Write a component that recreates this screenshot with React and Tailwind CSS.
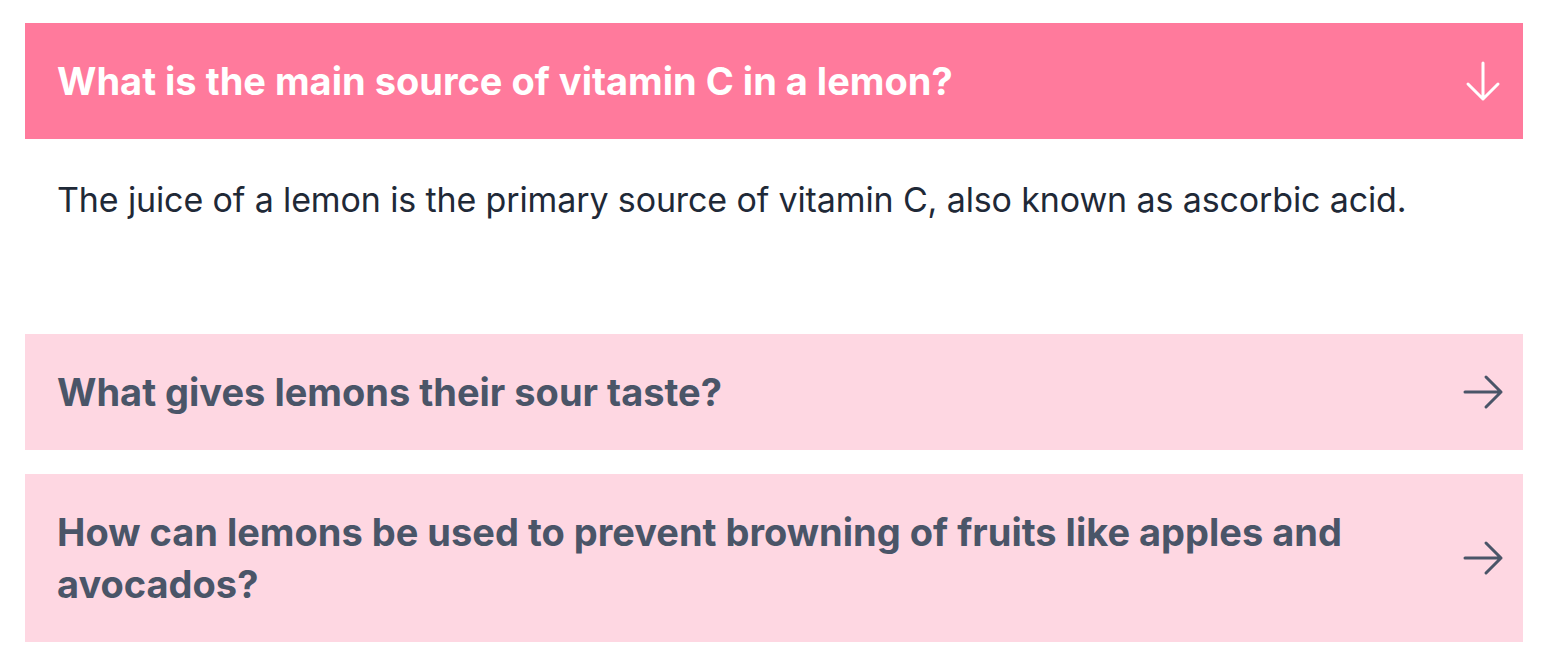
import { useState } from 'react';

const faqs = [
  {
    question: 'What is the main source of vitamin C in a lemon?',
    answer: 'The juice of a lemon is the primary source of vitamin C, also known as ascorbic acid.',
  },
  {
    question: 'What gives lemons their sour taste?',
    answer: 'Lemons taste sour because of the citric acid in their juice.',
  },
  {
    question: 'How can lemons be used to prevent browning of fruits like apples and avocados?',
    answer: 'The acid in lemon juice slows the reaction that turns cut fruit brown.',
  },
];

function ArrowIcon({ open }) {
  return (
    <svg
      xmlns="http://www.w3.org/2000/svg"
      fill="none"
      viewBox="0 0 24 24"
      strokeWidth={1.5}
      stroke="currentColor"
      className="w-12 h-12 shrink-0"
    >
      {open ? (
        <path strokeLinecap="round" strokeLinejoin="round" d="M19.5 13.5 12 21m0 0-7.5-7.5M12 21V3" />
      ) : (
        <path strokeLinecap="round" strokeLinejoin="round" d="M13.5 4.5 21 12m0 0-7.5 7.5M21 12H3" />
      )}
    </svg>
  );
}

export default function App() {
  const [openIndex, setOpenIndex] = useState(0);

  return (
    <div className="bg-white pl-[25px] pr-[23px] pt-[23px] font-['Inter',sans-serif]">
      {faqs.map((faq, i) => {
        const isOpen = openIndex === i;
        return (
          <div key={i} className="mb-6 last:mb-0">
            <button
              type="button"
              onClick={() => setOpenIndex(isOpen ? -1 : i)}
              className={`w-full flex items-center justify-between gap-8 text-left pl-8 pr-4 py-8 ${isOpen ? 'bg-[#ff7a9c] text-white' : 'bg-[#fed7e2] text-[#4a5568]'}`}
            >
              <span className="text-[38px] leading-[52px] font-bold">{faq.question}</span>
              <ArrowIcon open={isOpen} />
            </button>
            {isOpen && (
              <div className="px-8 pt-[37px] pb-[86px] text-[34px] leading-[48px] text-[#1f2937] tracking-[-0.13px]">
                {faq.answer}
              </div>
            )}
          </div>
        );
      })}
    </div>
  );
}
